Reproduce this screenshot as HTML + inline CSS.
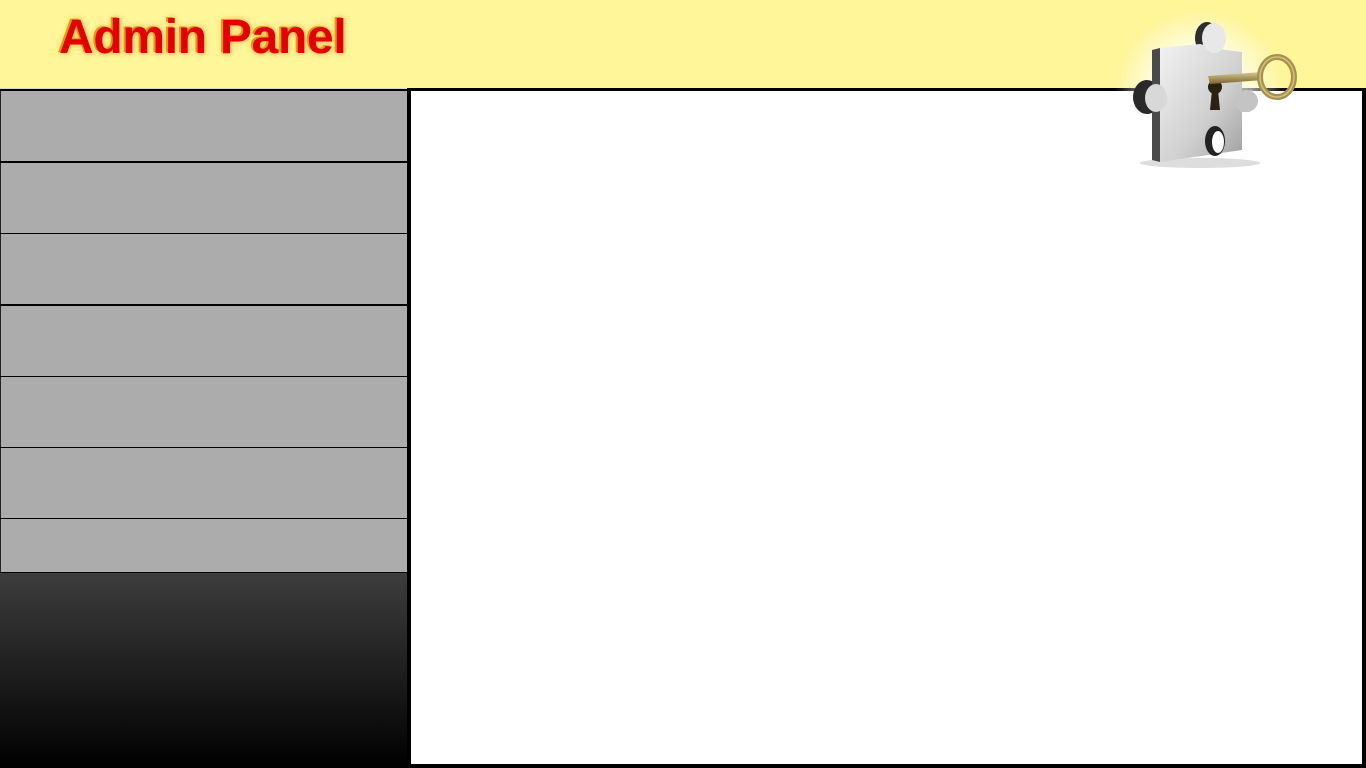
<!DOCTYPE html>
<html><head><style>
html,body{margin:0;padding:0;width:1366px;height:768px;overflow:hidden;background:#fff;}
#hdr{position:absolute;left:0;top:0;width:1366px;height:88px;background:#fff599;}
#title{position:absolute;left:59px;top:10px;font-family:"Liberation Sans",sans-serif;font-weight:bold;font-size:48px;color:#e20000;letter-spacing:-0.3px;text-shadow:-2px -1px 0 #d8a000,0 0 6px rgba(230,110,0,.7);}
.row{position:absolute;left:0;width:406px;background:#acacac;border-left:1px solid #222;border-right:1px solid #222;}
.b{position:absolute;left:0;width:408px;background:#000;}
#grad{position:absolute;left:0;top:573px;width:408px;height:195px;background:linear-gradient(#3d3d3d,#000);}
#main{position:absolute;left:407px;top:88px;width:959px;height:680px;box-sizing:border-box;border:4px solid #000;border-top-width:3px;background:#fff;}
#hl{position:absolute;left:0;top:88px;width:408px;height:1px;background:#d8d8c8;}
</style></head><body>
<div id="hdr"><div id="title">Admin Panel</div></div>
<div id="hl"></div>
<div class="row" style="top:89px;height:483px"></div>
<div class="b" style="top:89px;height:2px"></div>
<div class="b" style="top:161px;height:2px"></div>
<div class="b" style="top:233px;height:1px"></div>
<div class="b" style="top:304px;height:2px"></div>
<div class="b" style="top:376px;height:1px"></div>
<div class="b" style="top:447px;height:1px"></div>
<div class="b" style="top:518px;height:1px"></div>
<div class="b" style="top:572px;height:1px"></div>
<div id="grad"></div>
<div id="main"></div>
<svg style="position:absolute;left:1110px;top:10px" width="256" height="170" viewBox="1110 10 256 170">
<defs>
<radialGradient id="glow" cx="0.5" cy="0.5" r="0.5"><stop offset="0" stop-color="#fff" stop-opacity="1"/><stop offset="0.6" stop-color="#fff" stop-opacity="0.6"/><stop offset="1" stop-color="#fff" stop-opacity="0"/></radialGradient>
<linearGradient id="pz" x1="0" y1="0" x2="1" y2="1"><stop offset="0" stop-color="#f2f2f2"/><stop offset="0.6" stop-color="#cfcfcf"/><stop offset="1" stop-color="#a0a0a0"/></linearGradient>
<linearGradient id="gold" x1="0" y1="0" x2="0" y2="1"><stop offset="0" stop-color="#d8c890"/><stop offset="1" stop-color="#7a6630"/></linearGradient>
</defs>
<ellipse cx="1200" cy="90" rx="85" ry="80" fill="url(#glow)"/>
<ellipse cx="1200" cy="163" rx="60" ry="5" fill="#bbb" opacity="0.5"/>
<ellipse cx="1147" cy="97" rx="14" ry="17" fill="#2a2a2a"/>
<ellipse cx="1207" cy="38" rx="12" ry="16" fill="#2e2e2e"/>
<path d="M1152 50 L1160 48 L1160 162 L1152 160 Z" fill="#4a4a4a"/>
<path d="M1160 48 L1200 44 L1226 50 L1242 52 L1242 150 L1160 162 Z" fill="url(#pz)"/>
<ellipse cx="1214" cy="38" rx="12" ry="15" fill="#e8e8e8"/>
<ellipse cx="1156" cy="98" rx="11" ry="14" fill="#d8d8d8"/>
<ellipse cx="1246" cy="101" rx="12" ry="11" fill="#c4c4c4"/>
<path d="M1240 92 L1252 90 L1250 112 L1240 112Z" fill="#c4c4c4"/>
<ellipse cx="1215" cy="141" rx="10" ry="15" fill="#222"/>
<ellipse cx="1218" cy="142" rx="6" ry="11" fill="#fff"/>
<circle cx="1215" cy="87" r="7" fill="#2a2210"/>
<path d="M1212 90 L1218 90 L1220 110 L1210 110 Z" fill="#2a2210"/>
<path d="M1208 76 L1262 72 L1263 80 L1210 84 Z" fill="url(#gold)"/>
<ellipse cx="1277" cy="77" rx="17" ry="20" fill="none" stroke="#a8914a" stroke-width="6"/>
<ellipse cx="1277" cy="77" rx="17" ry="20" fill="none" stroke="#e0d4a0" stroke-width="1.5" opacity="0.7"/>
</svg>
</body></html>
